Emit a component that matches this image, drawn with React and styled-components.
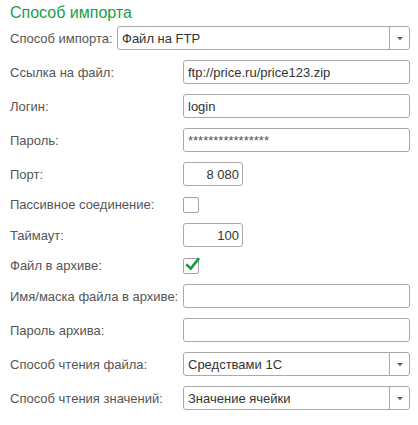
import React from "react";
import styled, { createGlobalStyle } from "styled-components";

const Global = createGlobalStyle`
  body {
    margin: 0;
    background: #fff;
    font-family: "Liberation Sans", Arial, sans-serif;
  }
`;

const Page = styled.div`
  width: 418px;
  height: 425px;
  padding: 3px 8px 0 10px;
  box-sizing: border-box;
`;

const Title = styled.div`
  font-size: 16px;
  line-height: 19px;
  color: #16a046;
  margin-bottom: 4px;
`;

const Form = styled.div`
  display: flex;
  flex-direction: column;
  gap: 10px;
`;

const Row = styled.div`
  display: flex;
  align-items: center;
  height: ${(p) => (p.$check ? 17 : 24)}px;
`;

const Label = styled.div`
  width: ${(p) => p.$width || 173}px;
  flex-shrink: 0;
  font-size: 13px;
  color: #555;
  white-space: nowrap;
`;

const Field = styled.div`
  box-sizing: border-box;
  width: ${(p) => (p.$width ? `${p.$width}px` : "auto")};
  flex: ${(p) => (p.$width ? "none" : 1)};
  height: 24px;
  border: 1px solid #a9a9a9;
  border-radius: 3px;
  background: #fff;
  display: flex;
  align-items: center;
  justify-content: ${(p) => (p.$right ? "flex-end" : "flex-start")};
  padding: 0 ${(p) => (p.$right ? 3 : 0)}px 0 4px;
  font-size: 13px;
  color: #333;
  white-space: nowrap;
  overflow: hidden;
`;

const Mask = styled.span`
  font-size: 13px;
  color: #555;
`;

const Select = styled.div`
  box-sizing: border-box;
  flex: 1;
  height: 24px;
  border: 1px solid #a9a9a9;
  border-radius: 3px;
  background: #fff;
  display: flex;
  align-items: stretch;
  font-size: 13px;
  color: #333;
`;

const SelectValue = styled.div`
  flex: 1;
  display: flex;
  align-items: center;
  padding-left: 4px;
`;

const SelectButton = styled.div`
  width: 19px;
  border-left: 1px solid #a9a9a9;
  display: flex;
  align-items: center;
  justify-content: center;
`;

const Arrow = styled.div`
  width: 0;
  height: 0;
  border-left: 3px solid transparent;
  border-right: 3px solid transparent;
  border-top: 3px solid #555;
  margin-top: 1px;
`;

const Box = styled.div`
  box-sizing: border-box;
  width: 16px;
  height: 16px;
  border: 1px solid #a3a3a3;
  border-radius: 2px;
  background: #fff;
  position: relative;
`;

const CheckMark = styled.svg`
  position: absolute;
  left: 1px;
  top: -3px;
`;

const Checkbox = ({ checked }) => (
  <Box>
    {checked && (
      <CheckMark width="16" height="16" viewBox="0 0 16 16">
        <path
          d="M2.2 9.2 L5.8 12.6 L13.2 3.2"
          fill="none"
          stroke="#159c43"
          strokeWidth="2.6"
          strokeLinecap="square"
        />
      </CheckMark>
    )}
  </Box>
);

const Dropdown = ({ value }) => (
  <Select>
    <SelectValue>{value}</SelectValue>
    <SelectButton>
      <Arrow />
    </SelectButton>
  </Select>
);

export default function App() {
  return (
    <Page>
      <Global />
      <Title>Способ импорта</Title>
      <Form>
        <Row>
          <Label $width={107}>Способ импорта:</Label>
          <Dropdown value="Файл на FTP" />
        </Row>
        <Row>
          <Label>Ссылка на файл:</Label>
          <Field>ftp://price.ru/price123.zip</Field>
        </Row>
        <Row>
          <Label>Логин:</Label>
          <Field>login</Field>
        </Row>
        <Row>
          <Label>Пароль:</Label>
          <Field>
            <Mask>****************</Mask>
          </Field>
        </Row>
        <Row>
          <Label>Порт:</Label>
          <Field $width={60} $right>
            8 080
          </Field>
        </Row>
        <Row $check>
          <Label>Пассивное соединение:</Label>
          <Checkbox />
        </Row>
        <Row>
          <Label>Таймаут:</Label>
          <Field $width={60} $right>
            100
          </Field>
        </Row>
        <Row $check>
          <Label>Файл в архиве:</Label>
          <Checkbox checked />
        </Row>
        <Row>
          <Label>Имя/маска файла в архиве:</Label>
          <Field />
        </Row>
        <Row>
          <Label>Пароль архива:</Label>
          <Field />
        </Row>
        <Row>
          <Label>Способ чтения файла:</Label>
          <Dropdown value="Средствами 1С" />
        </Row>
        <Row>
          <Label>Способ чтения значений:</Label>
          <Dropdown value="Значение ячейки" />
        </Row>
      </Form>
    </Page>
  );
}
